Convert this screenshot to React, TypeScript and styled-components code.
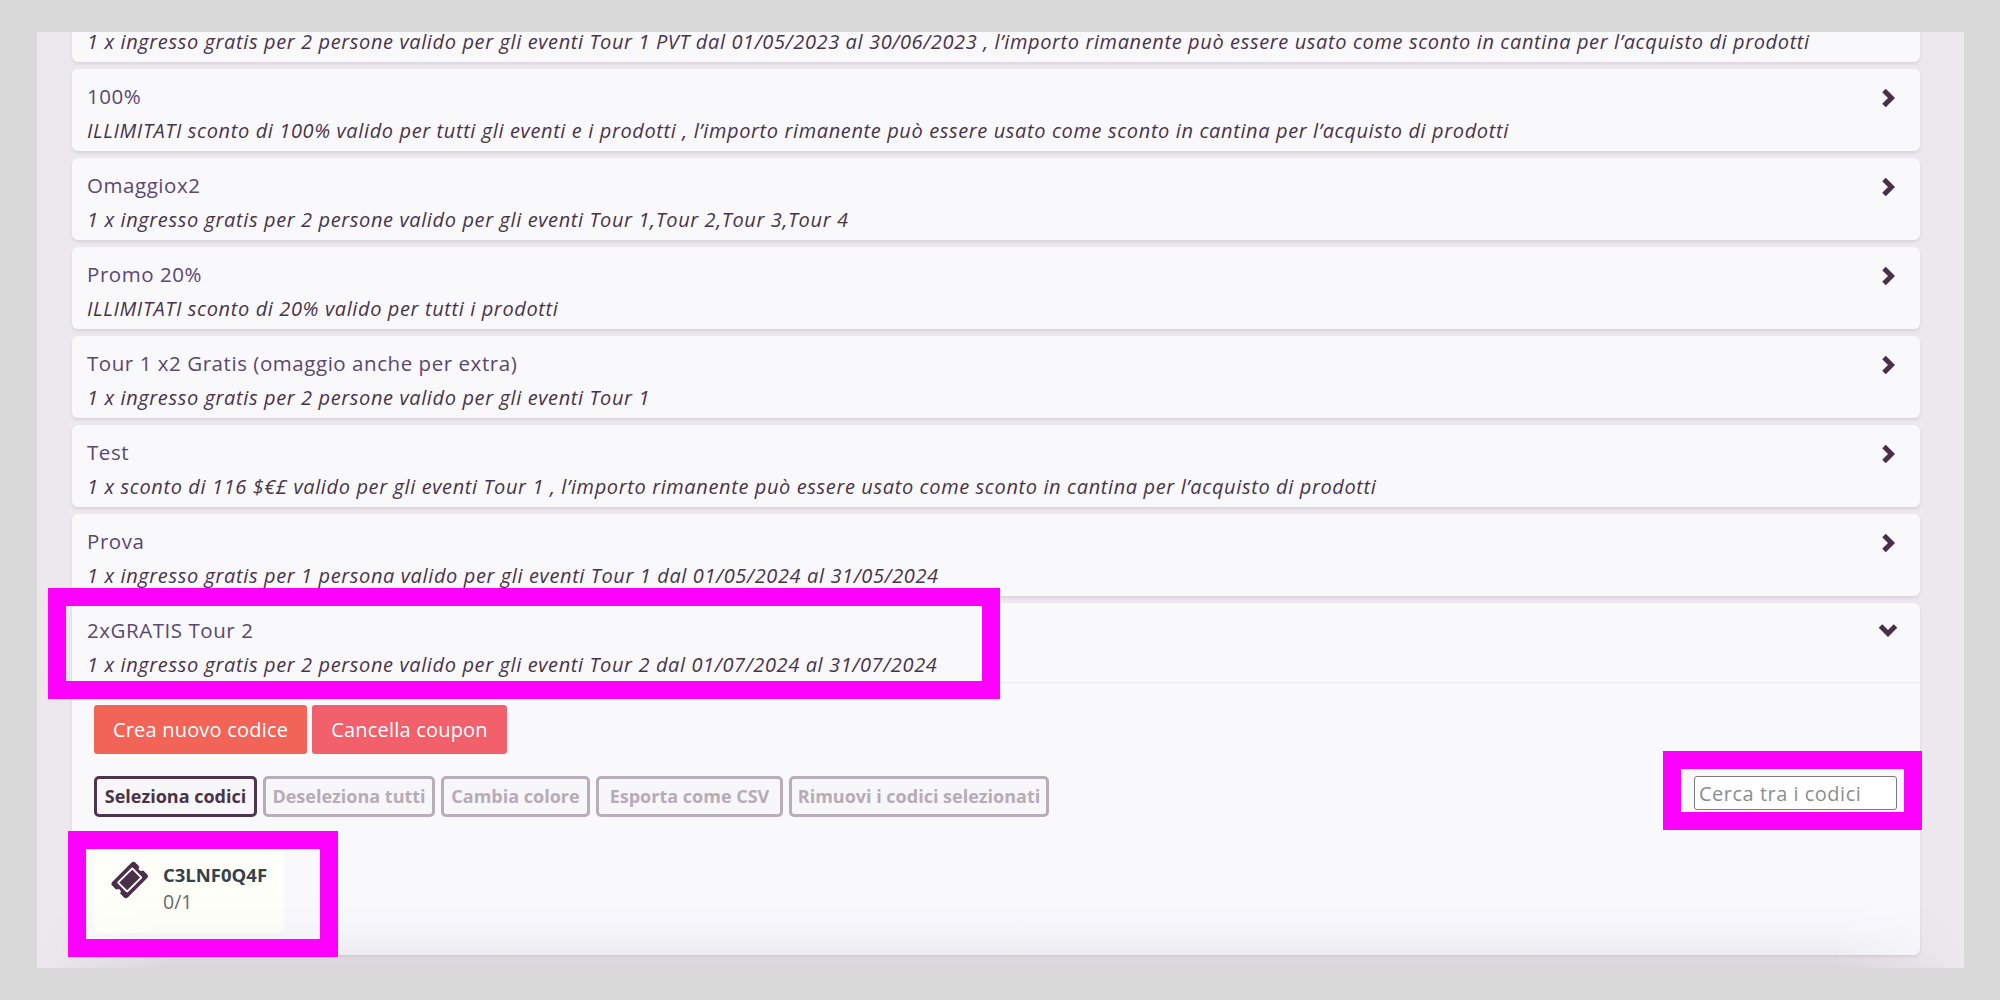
import React from "react";
import styled, { createGlobalStyle } from "styled-components";
import { FaTicketAlt } from "react-icons/fa";

const Global = createGlobalStyle`
  html, body { margin: 0; padding: 0; background: #d9d9d9; }
  body { font-family: "Open Sans", "Noto Sans", sans-serif; }
  * { box-sizing: border-box; }
`;

const Page = styled.div`
  position: relative;
  width: 2000px;
  height: 1000px;
  padding: 32px 36px 32px 37px;
  background: #d9d9d9;
  overflow: hidden;
`;

const Panel = styled.main`
  position: relative;
  height: 936px;
  padding: 0 44px 13px 35px;
  background: #ece8ed;
  overflow: hidden;
  display: flex;
  flex-direction: column;
  justify-content: flex-end;
  gap: 7px;
`;

const BottomShade = styled.div`
  position: absolute;
  left: 0;
  right: 0;
  bottom: 0;
  height: 72px;
  pointer-events: none;
  background: linear-gradient(
    to bottom,
    rgba(70, 50, 80, 0),
    rgba(70, 50, 80, 0.015) 45%,
    rgba(70, 50, 80, 0.06) 80%,
    rgba(70, 50, 80, 0.1)
  );
  mask-image: linear-gradient(to right, transparent, black 130px, black calc(100% - 130px), transparent);
`;

const Card = styled.section`
  flex: none;
  background: #f9f9fc;
  border-radius: 6px;
  box-shadow: 0 2px 3px rgba(60, 40, 70, 0.1);
`;

const Header = styled.header<{ $open?: boolean }>`
  position: relative;
  height: ${(p) => (p.$open ? "80px" : "82px")};
  padding: 12px 15px 0;
  border-bottom: ${(p) => (p.$open ? "1px solid #eeeef1" : "none")};
`;

const Title = styled.div`
  font-size: 20.5px;
  line-height: 30px;
  color: #5c4672;
  letter-spacing: 0.55px;
`;

const Subtitle = styled.div`
  margin-top: 7px;
  font-size: 20px;
  line-height: 26px;
  font-style: italic;
  color: #4a3349;
  letter-spacing: 0.62px;
  white-space: nowrap;
`;

const Arrow = styled.svg<{ $down?: boolean }>`
  position: absolute;
  right: ${(p) => (p.$down ? "22px" : "25px")};
  top: ${(p) => (p.$down ? "20px" : "19px")};
  width: ${(p) => (p.$down ? "20px" : "14px")};
  height: ${(p) => (p.$down ? "14px" : "20px")};
  fill: none;
  stroke: #4b2e4a;
  stroke-width: 5;
`;

const Body = styled.div`
  height: 272px;
  padding: 22px 23px 0 22px;
`;

const ActionRow = styled.div`
  display: flex;
  gap: 5px;
`;

const ActionButton = styled.button<{ $bg: string; $w: number }>`
  width: ${(p) => p.$w}px;
  height: 49px;
  padding: 0;
  border: none;
  border-radius: 3px;
  background: ${(p) => p.$bg};
  color: #fff;
  font: inherit;
  font-size: 20px;
  letter-spacing: 0.2px;
`;

const ToolRow = styled.div`
  margin-top: 22px;
  display: flex;
  align-items: flex-start;
  justify-content: space-between;
`;

const ToolGroup = styled.div`
  display: flex;
  gap: 6px;
`;

const ToolButton = styled.button<{ $active?: boolean; $w: number }>`
  width: ${(p) => p.$w}px;
  height: 41px;
  padding: 0 0 2px;
  border: 3px solid ${(p) => (p.$active ? "#4f3350" : "#b9adb9")};
  border-radius: 5px;
  background: #f7f6f8;
  color: ${(p) => (p.$active ? "#4a3349" : "#b7abb7")};
  font: inherit;
  font-size: 18px;
  font-weight: 700;
  white-space: nowrap;
`;

const Search = styled.input`
  width: 203px;
  height: 34px;
  padding: 0 4px;
  border: 1px solid #7b7b7b;
  border-radius: 3px;
  background: #fff;
  font: inherit;
  font-size: 20px;
  letter-spacing: 0.5px;
  &::placeholder { color: #8d8d8d; opacity: 1; }
`;

const Coupon = styled.div`
  margin-top: 23px;
  width: 190px;
  height: 93px;
  padding: 22px 0 0 17px;
  display: flex;
  gap: 16px;
  background: #fefff8;
  border-radius: 8px;
`;

const TicketIcon = styled.span`
  width: 36px;
  height: 36px;
  display: flex;
  align-items: center;
  justify-content: center;
  color: #4b2e4a;
  font-size: 33px;
  transform: rotate(-45deg);
`;

const CouponCode = styled.div`
  font-size: 18.5px;
  line-height: 26px;
  font-weight: 700;
  color: #36414a;
`;

const CouponCount = styled.div`
  margin-top: 2px;
  font-size: 19.5px;
  line-height: 24px;
  color: #6a6a6a;
`;

const Highlight = styled.div<{ $x: number; $y: number; $w: number; $h: number }>`
  position: absolute;
  left: ${(p) => p.$x}px;
  top: ${(p) => p.$y}px;
  width: ${(p) => p.$w}px;
  height: ${(p) => p.$h}px;
  border: 18px solid #ff00ff;
  pointer-events: none;
`;

const rows = [
  ["", "1 x ingresso gratis per 2 persone valido per gli eventi Tour 1 PVT dal 01/05/2023 al 30/06/2023 , l’importo rimanente può essere usato come sconto in cantina per l’acquisto di prodotti"],
  ["100%", "ILLIMITATI sconto di 100% valido per tutti gli eventi e i prodotti , l’importo rimanente può essere usato come sconto in cantina per l’acquisto di prodotti"],
  ["Omaggiox2", "1 x ingresso gratis per 2 persone valido per gli eventi Tour 1,Tour 2,Tour 3,Tour 4"],
  ["Promo 20%", "ILLIMITATI sconto di 20% valido per tutti i prodotti"],
  ["Tour 1 x2 Gratis (omaggio anche per extra)", "1 x ingresso gratis per 2 persone valido per gli eventi Tour 1"],
  ["Test", "1 x sconto di 116 $€£ valido per gli eventi Tour 1 , l’importo rimanente può essere usato come sconto in cantina per l’acquisto di prodotti"],
  ["Prova", "1 x ingresso gratis per 1 persona valido per gli eventi Tour 1 dal 01/05/2024 al 31/05/2024"],
];

const tools: [string, number][] = [
  ["Seleziona codici", 163],
  ["Deseleziona tutti", 172],
  ["Cambia colore", 149],
  ["Esporta come CSV", 187],
  ["Rimuovi i codici selezionati", 260],
];

export default function App() {
  return (
    <Page>
      <Global />
      <Panel>
        {rows.map(([title, sub], i) => (
          <Card key={i}>
            <Header>
              <Title>{title || "\u00a0"}</Title>
              <Subtitle>{sub}</Subtitle>
              <Arrow viewBox="0 0 14 20"><path d="M3 2.5 L10.5 10 L3 17.5" /></Arrow>
            </Header>
          </Card>
        ))}
        <Card>
          <Header $open>
            <Title>2xGRATIS Tour 2</Title>
            <Subtitle>1 x ingresso gratis per 2 persone valido per gli eventi Tour 2 dal 01/07/2024 al 31/07/2024</Subtitle>
            <Arrow $down viewBox="0 0 20 14"><path d="M2.5 3 L10 10.5 L17.5 3" /></Arrow>
          </Header>
          <Body>
            <ActionRow>
              <ActionButton $bg="#f26457" $w={213}>Crea nuovo codice</ActionButton>
              <ActionButton $bg="#f2606b" $w={195}>Cancella coupon</ActionButton>
            </ActionRow>
            <ToolRow>
              <ToolGroup>
                {tools.map(([label, w], i) => (
                  <ToolButton key={label} $active={i === 0} $w={w}>{label}</ToolButton>
                ))}
              </ToolGroup>
              <Search placeholder="Cerca tra i codici" />
            </ToolRow>
            <Coupon>
              <TicketIcon><FaTicketAlt /></TicketIcon>
              <div>
                <CouponCode>C3LNF0Q4F</CouponCode>
                <CouponCount>0/1</CouponCount>
              </div>
            </Coupon>
          </Body>
        </Card>
        <BottomShade />
      </Panel>
      <Highlight $x={48} $y={588} $w={952} $h={111} />
      <Highlight $x={1663} $y={751} $w={259} $h={79} />
      <Highlight $x={68} $y={831} $w={270} $h={126} />
    </Page>
  );
}
